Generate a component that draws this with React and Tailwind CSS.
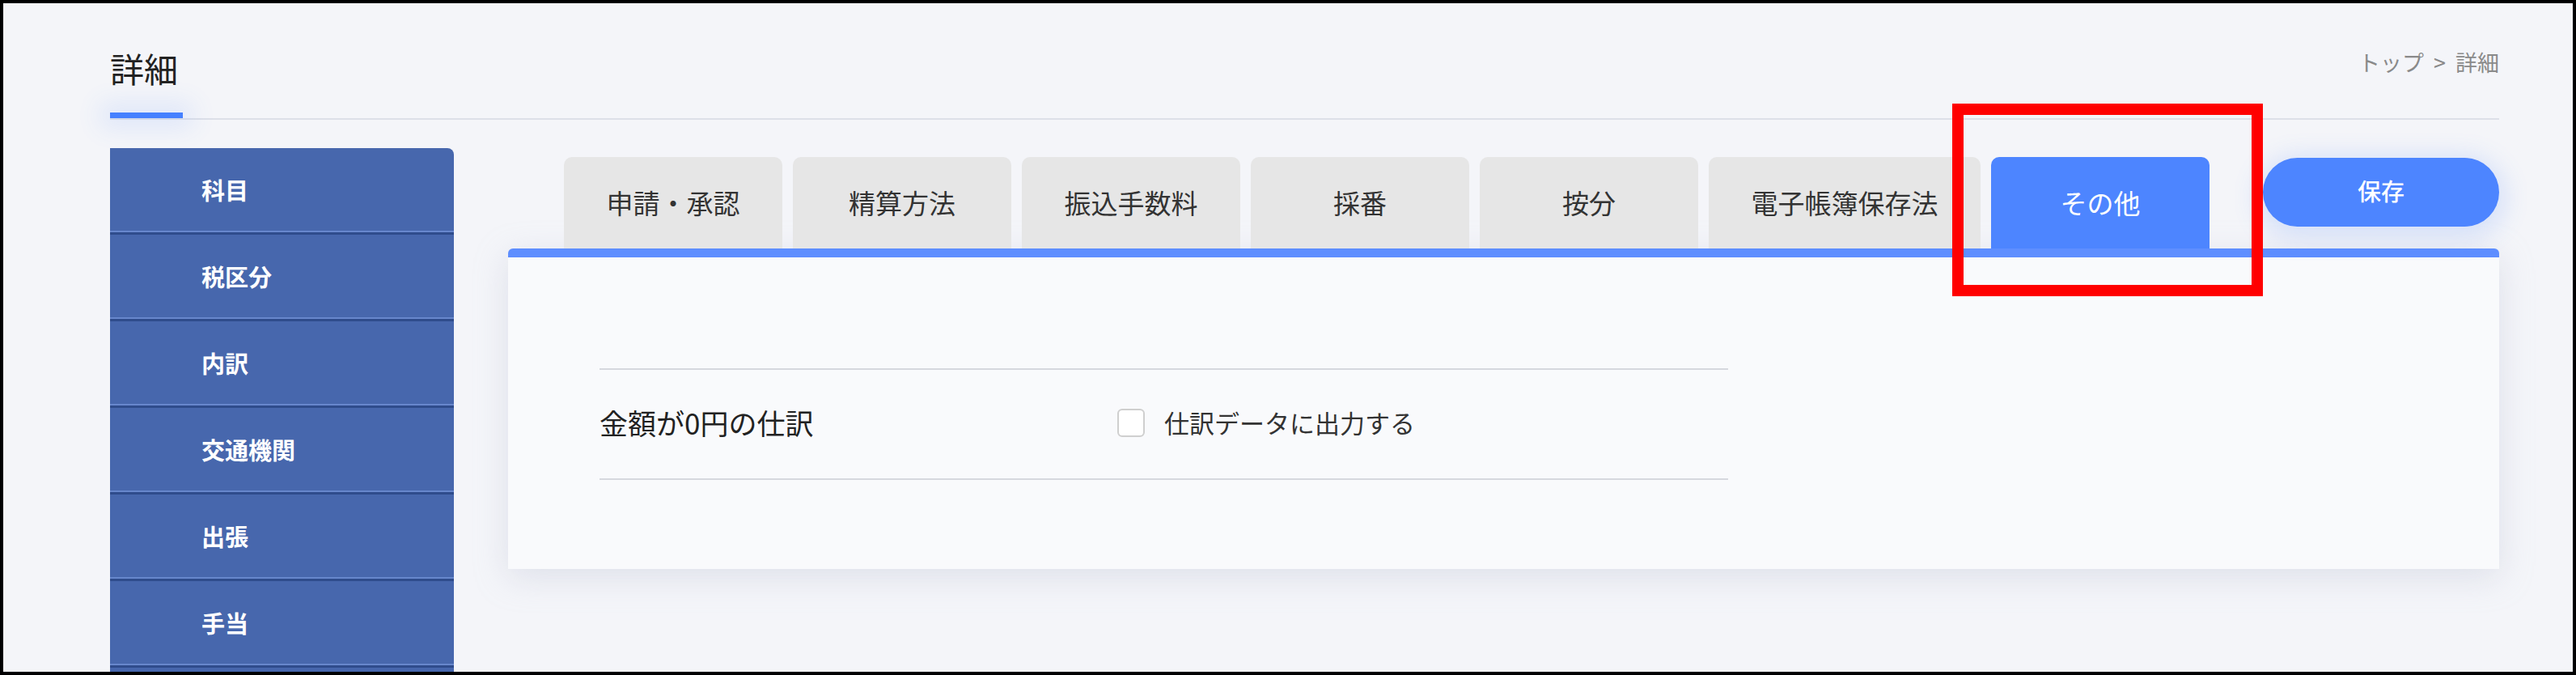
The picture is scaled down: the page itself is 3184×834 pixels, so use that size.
import React from "react";

const FONT = { fontFamily: '"Noto Sans CJK JP", "Noto Sans", sans-serif' };

const sideItems = ["科目", "税区分", "内訳", "交通機関", "出張", "手当", ""];

const tabs = [
  { label: "申請・承認", w: "w-[270px]" },
  { label: "精算方法", w: "w-[270px]" },
  { label: "振込手数料", w: "w-[270px]" },
  { label: "採番", w: "w-[270px]" },
  { label: "按分", w: "w-[270px]" },
  { label: "電子帳簿保存法", w: "w-[336px]" },
];

export default function App() {
  return (
    <div
      style={FONT}
      className="relative w-[3184px] h-[834px] overflow-hidden border-[4px] border-black bg-[#f4f5f9] pl-[132px] pr-[91px]"
    >
      {/* header */}
      <div className="flex justify-between items-start pt-[55px]">
        <div>
          <h1 className="text-[42px] leading-[50px] text-[#222] font-normal">詳細</h1>
          <div className="mt-[30px] h-[7px] w-[90px] bg-[#4580ff] shadow-[0_0_30px_12px_rgba(77,133,255,0.12)]"></div>
        </div>
        <div className="flex gap-[12px] text-[27px] leading-[36px] text-[#8a8a8a]">
          <span>トップ</span>
          <span>&gt;</span>
          <span>詳細</span>
        </div>
      </div>
      <div className="h-[2px] bg-[#dde0e8]"></div>

      {/* body */}
      <div className="mt-[35px] flex gap-[67px]">
        {/* sidebar */}
        <div className="w-[425px] shrink-0 rounded-tr-[8px] overflow-hidden bg-[#4767ad]">
          {sideItems.map((s, i) => (
            <div
              key={i}
              className="h-[107px] flex items-center pl-[113px] text-white text-[29px] font-bold border-b-[3px] border-[#2f4c8c] shadow-[inset_0_-2px_0_#6787cc]"
            >
              {s}
            </div>
          ))}
        </div>

        {/* main */}
        <div className="flex-1 pt-[11px]">
          <div className="flex items-start">
            <div className="flex gap-[13px] pl-[69px]">
              {tabs.map((t) => (
                <div
                  key={t.label}
                  className={`${t.w} h-[113px] rounded-t-[10px] bg-[#e6e6e6] flex items-center justify-center text-[33px] text-[#333]`}
                >
                  {t.label}
                </div>
              ))}
              <div className="w-[270px] h-[113px] rounded-t-[10px] bg-[#4d85ff] flex items-center justify-center text-[33px] text-white">
                その他
              </div>
            </div>
            <button className="ml-auto mt-[1px] w-[292px] h-[85px] rounded-full bg-[#4d85ff] text-white text-[29px] font-medium shadow-[0_6px_30px_8px_rgba(77,133,255,0.18)] flex items-center justify-center pb-[4px]">
              保存
            </button>
          </div>

          {/* card */}
          <div className="rounded-t-[6px] border-t-[11px] border-[#5e8eff] bg-[#f9fafc] shadow-[0_10px_40px_rgba(180,185,205,0.35)] pt-[137px] pb-[110px]">
            <div className="ml-[113px] w-[1395px] h-[138px] border-t-2 border-b-2 border-[#d6d8de] flex items-center pb-[4px]">
              <div className="w-[640px] text-[35px] text-[#222]">金額が0円の仕訳</div>
              <label className="flex items-center gap-[24px]">
                <span className="w-[34px] h-[35px] rounded-[6px] border-2 border-[#cfcfcf] bg-white"></span>
                <span className="text-[31px] text-[#333]">仕訳データに出力する</span>
              </label>
            </div>
          </div>
        </div>
      </div>

      {/* annotation */}
      <div className="absolute left-[2409px] top-[124px] w-[384px] h-[238px] border-[14px] border-[#ff0000]"></div>
    </div>
  );
}
